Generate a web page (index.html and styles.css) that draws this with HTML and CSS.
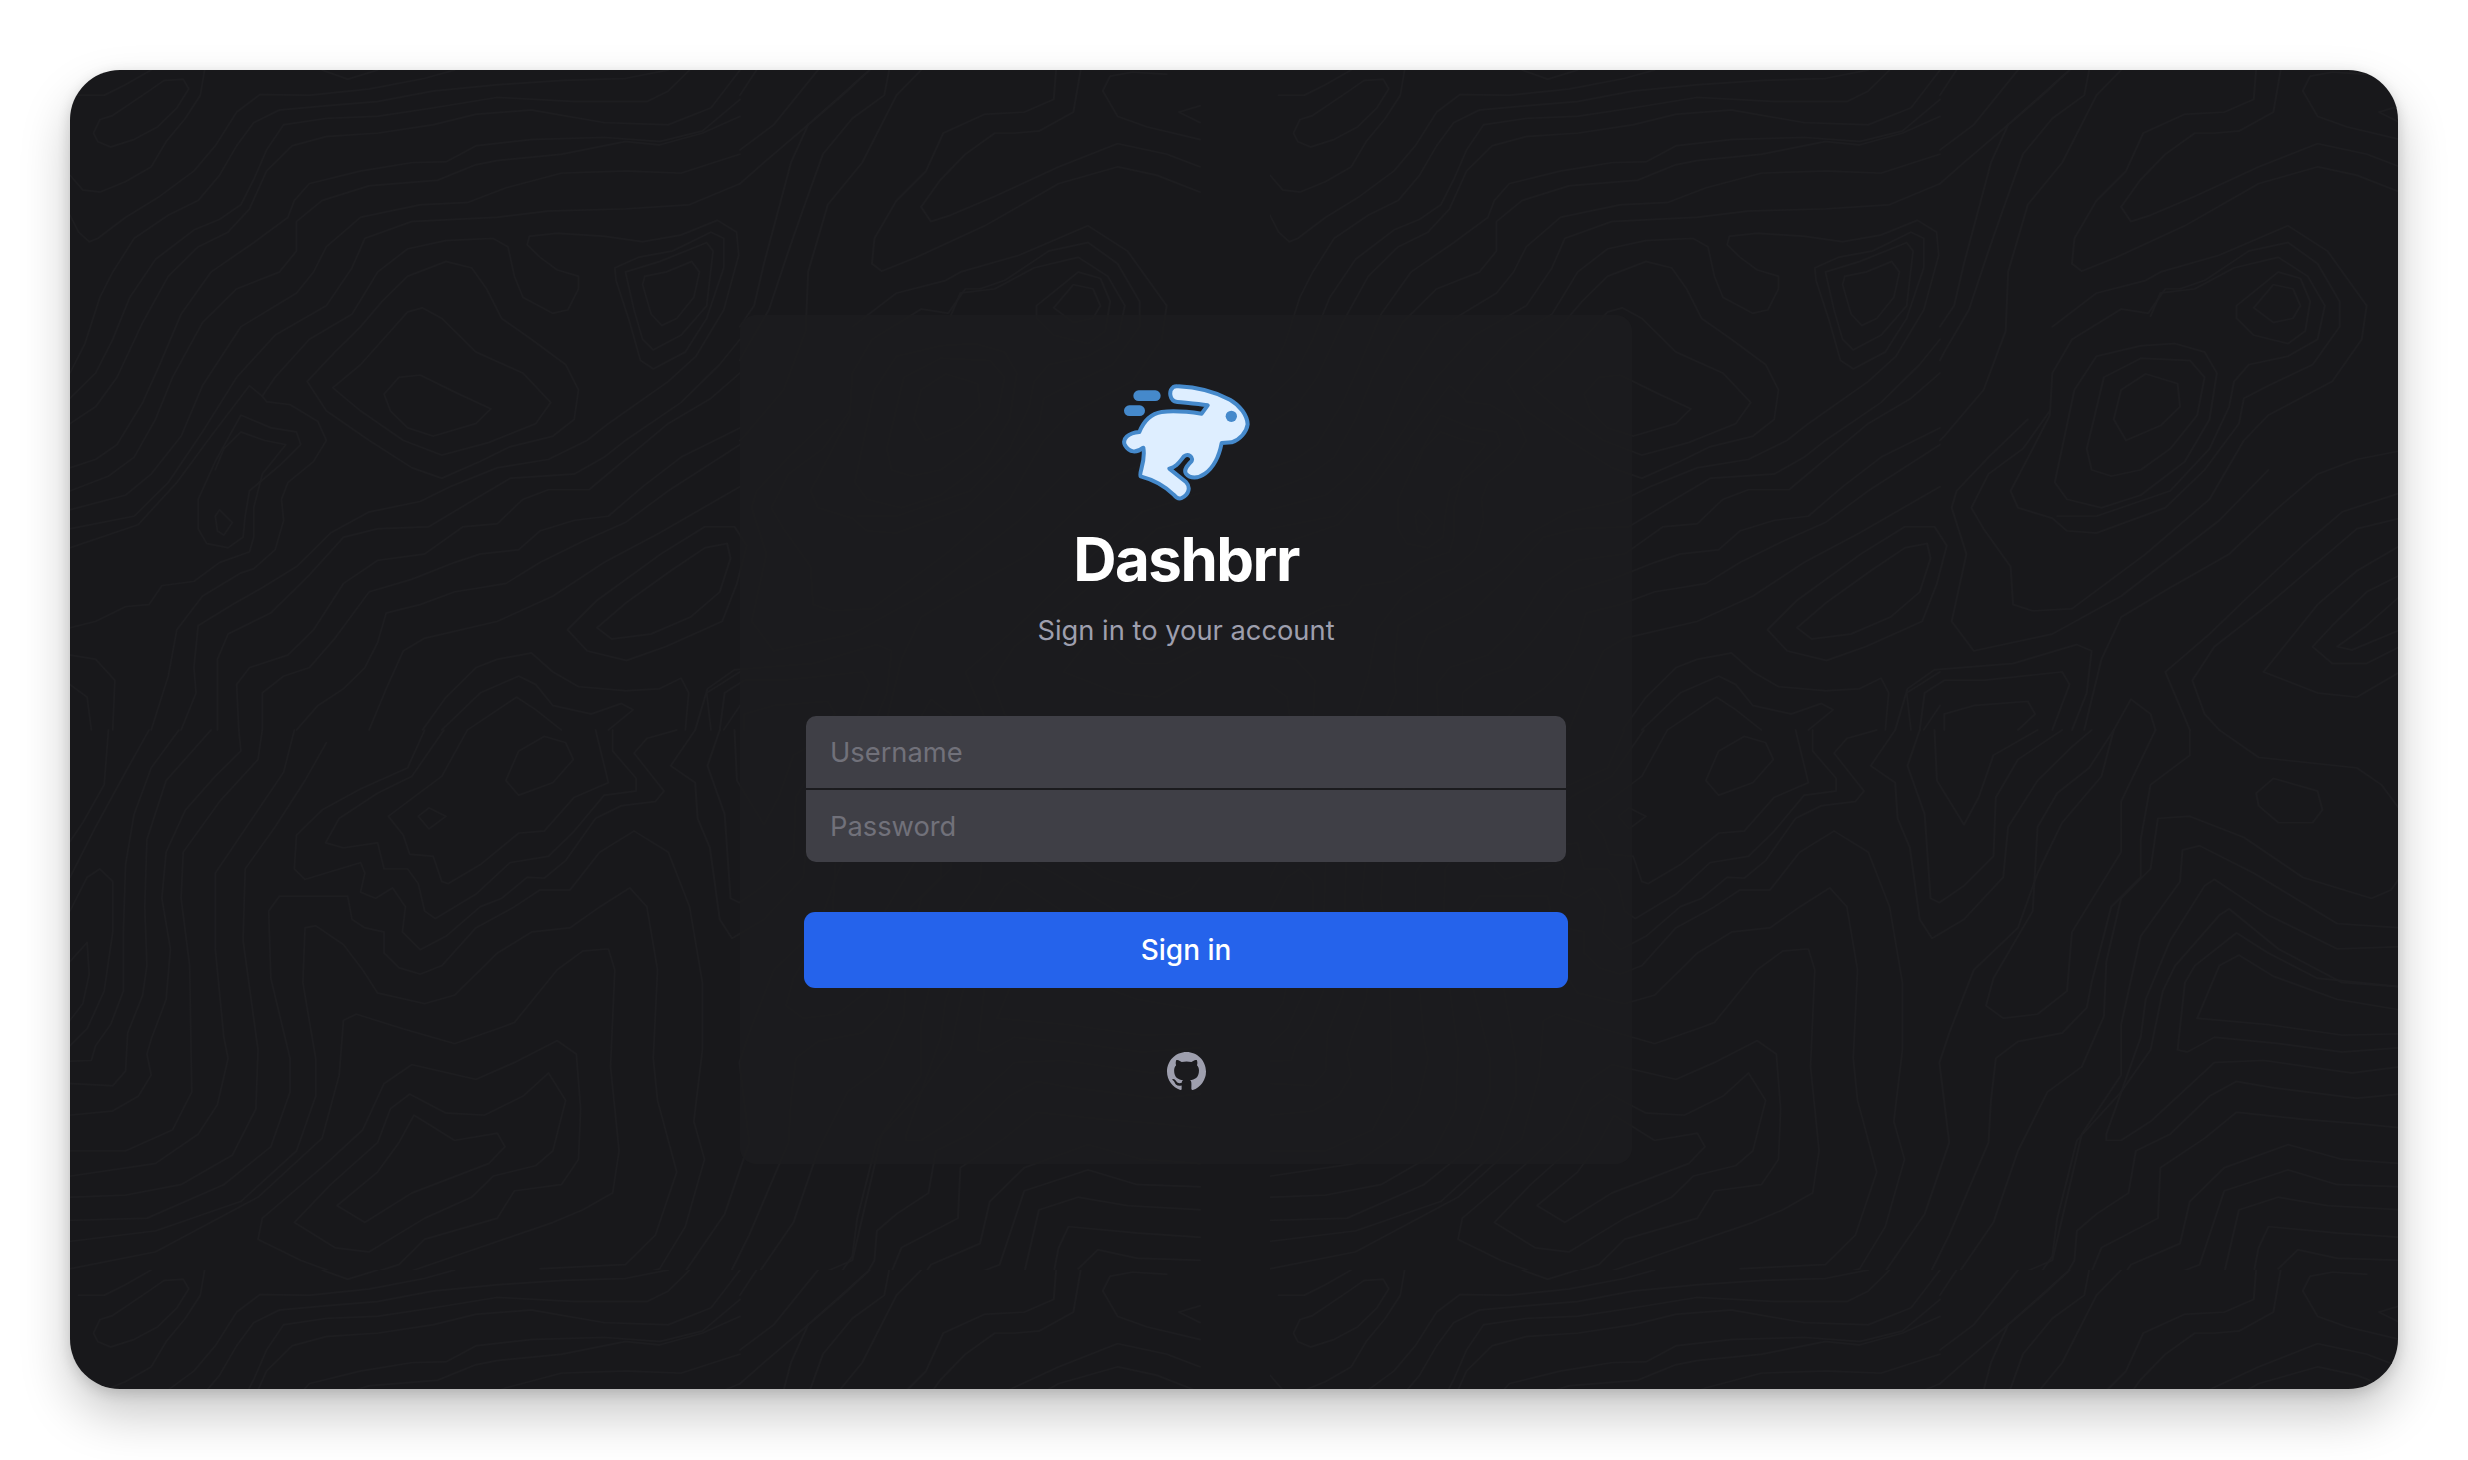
FILE: index.html
```html
<!DOCTYPE html>
<html lang="en">
<head>
<meta charset="utf-8">
<title>Dashbrr</title>
<link rel="stylesheet" href="styles.css">
</head>
<body>
<main class="window">
  <svg class="topo" aria-hidden="true">
    <defs>
      <pattern id="topography" width="1200" height="1200" patternUnits="userSpaceOnUse">
        <g class="topo-lines" transform="scale(0.4273 0.4209)">
          <path d="M0 250 30 285 70 290 130 265 190 230 225 170 270 115 305 60 315 0"/>
          <path d="M55 150 70 118 100 108 170 60 220 25 265 22 278 45 250 90 205 135 150 165 95 183 65 170Z"/>
          <path d="M20 60 80 60 130 35 190 0"/>
          <path d="M590 0 650 22 720 0"/>
          <path d="M0 345 20 385 45 408 65 400 130 350 210 300 290 240 340 180 390 100 445 58 560 60 700 45 830 20 900 0"/>
          <path d="M0 720 35 650 70 540 100 480 150 400 230 345 300 310 350 250 390 180 430 125 490 95 600 85 720 75 850 50 1000 35 1150 25 1300 20 1400 0"/>
          <path d="M0 780 60 720 100 640 140 540 200 450 290 380 350 355 400 320 430 260 460 190 500 130 600 115 720 110 850 90 1000 65 1180 75 1350 75 1400 50 1450 0"/>
          <path d="M0 840 60 800 110 730 170 600 230 490 300 420 370 385 420 330 460 240 520 180 600 158 720 150 850 130 950 105 1080 95 1250 125 1400 130 1500 90 1568 0"/>
          <path d="M0 945 60 925 110 890 170 790 210 700 260 580 330 480 430 410 510 350 525 310 560 270 680 240 800 220 880 218 950 180 1080 165 1250 160 1380 170 1480 145 1568 70"/>
          <path d="M0 1000 90 965 150 920 200 830 240 730 310 600 390 520 490 480 530 430 530 360 590 310 700 275 860 262 950 225 1000 215 1150 200 1300 170 1380 178 1480 150 1568 110"/>
          <path d="M0 1045 130 1010 190 960 260 870 310 750 400 610 530 530 570 480 600 420 680 350 820 320 930 315 1020 280 1150 245 1300 240 1430 245 1568 200"/>
          <path d="M0 1090 150 1060 230 980 310 860 390 730 480 630 600 560 660 470 690 400 800 360 1000 350 1120 335 1300 330 1450 320 1568 270"/>
          <path d="M0 1135 160 1080 250 980 330 870 420 750 450 775 460 788 515 795 580 835 600 880 570 930 510 980 495 1020 500 1070 480 1140 430 1185 400 1195 310 1250 250 1330 230 1440 190 1568"/>
          <path d="M450 775 480 730 560 640 660 580 720 480 790 425 880 405 990 400 1025 420 1040 490 1060 540 1130 578 1165 570 1190 520 1190 490 1140 475 1100 445 1070 415 1075 395 1140 388 1250 395 1340 408 1430 392 1515 357 1560 385 1565 440 1530 570 1465 680 1400 740 1260 840 1210 880 1120 925 1000 945 890 990 820 1025 700 1050 610 1100 530 1180 450 1230 380 1270 300 1320 290 1420 295 1480 260 1568"/>
          <path d="M555 740 620 670 680 610 730 550 790 490 880 455 940 470 975 520 1010 590 1080 640 1160 700 1190 760 1180 830 1130 870 1030 895 960 930 870 970 800 945 700 880 600 810Z"/>
          <path d="M615 755 680 700 790 575 825 565 870 590 950 670 1060 720 1125 790 1090 840 980 885 870 915 780 880 680 810Z"/>
          <path d="M735 770 770 730 820 725 900 765 985 805 950 840 850 870 790 850 750 810Z"/>
          <path d="M1340 510 1345 490 1395 480 1455 455 1473 480 1460 540 1420 590 1385 607 1360 580Z"/>
          <path d="M1300 480 1380 455 1490 410 1505 430 1490 560 1430 630 1365 665 1340 640 1320 570Z"/>
          <path d="M1275 470 1330 445 1410 430 1500 385 1530 400 1530 470 1490 590 1440 670 1365 710 1335 690 1310 600 1278 500Z"/>
          <path d="M400 820 470 850 530 860 540 890 490 940 420 1000 410 1060 405 1110 370 1135 320 1125 300 1090 300 1020 340 930Z"/>
          <path d="M0 1325 60 1310 130 1275 185 1270 215 1225 290 1215 350 1170 420 1145 430 1110 430 1040 450 960 505 890 455 880 400 860 360 900 340 950"/>
          <path d="M340 1060 350 1045 380 1075 360 1105 345 1095Z"/>
          <path d="M345 1568 345 1400 370 1340 470 1290 560 1200 640 1110 720 1090 840 1085 930 1030 1030 970 1180 960 1250 920 1300 880 1430 790 1520 700 1568 640"/>
          <path d="M395 1568 390 1460 420 1420 510 1390 570 1330 640 1220 720 1165 830 1150 920 1085 1000 1078 1060 1020 1120 997 1215 997 1270 950 1400 840 1500 780 1568 720"/>
          <path d="M450 1568 450 1480 500 1440 560 1420 620 1350 700 1240 800 1210 900 1170 960 1150 1050 1140 1100 1095 1180 1070 1260 1060 1340 990 1430 920 1568 850"/>
          <path d="M530 1568 580 1510 640 1470 690 1420 720 1360 740 1290 820 1270 900 1240 1020 1220 1100 1170 1200 1120 1300 1075 1400 1000 1568 890"/>
          <path d="M700 1568 740 1470 780 1380 830 1350 1000 1310 1130 1250 1250 1170 1380 1100 1568 990"/>
          <path d="M825 1568 880 1490 950 1420 1000 1400 1080 1385 1130 1430 1190 1465 1300 1475 1380 1470 1430 1445 1448 1480 1440 1568"/>
          <path d="M870 1568 960 1480 1050 1440 1090 1460 1130 1510 1220 1530 1290 1505 1318 1520 1260 1568"/>
          <path d="M930 1568 1045 1490 1090 1520 1150 1568"/>
          <path d="M1500 1568 1490 1480 1568 1430"/>
          <path d="M1530 1568 1568 1510"/>
          <path d="M0 1390 60 1400 105 1450 100 1568"/>
          <path d="M0 1460 40 1490 50 1568"/>
        </g>
        <g class="topo-lines" transform="translate(0 660) scale(0.4273 0.4209)">
          <path d="M395 0 400 50 340 110 270 190 225 290 215 400 235 520 225 640 190 735 180 770 190 820 160 870 100 905 0 915"/>
          <path d="M0 430 40 350 70 330 100 360 100 480 80 620 40 710 0 750"/>
          <path d="M0 550 40 505 45 580 30 650 0 690"/>
          <path d="M90 0 80 130 30 220 0 265"/>
          <path d="M185 0 130 100 60 230 0 350"/>
          <path d="M255 0 190 90 150 200 130 320 125 480 125 620 95 700 60 750 50 785 0 787"/>
          <path d="M330 0 225 120 180 260 175 420 180 560 170 630 135 720 130 810 100 845 0 840"/>
          <path d="M450 0 440 70 350 170 265 290 260 400 280 560 285 860 240 950 130 1000 0 1000"/>
          <path d="M525 0 500 100 420 220 340 340 340 520 360 730 370 780 345 890 300 960 200 1030 0 1060"/>
          <path d="M600 30 550 120 480 230 410 330 405 500 440 760 435 900 380 1010 260 1080 130 1105 0 1110"/>
          <path d="M830 0 790 90 680 140 590 190 530 250 525 330 550 355 680 315 690 340 680 385 715 400 755 375 785 420 778 480 820 522 880 490 960 420 1010 400 1070 350 1110 352 1160 310 1230 210 1290 180 1370 170 1390 145 1320 55 1350 20 1420 0"/>
          <path d="M875 0 800 110 720 150 630 210 598 268 640 280 720 268 735 330 790 330 815 365 830 430 855 448 950 390 1030 315 1120 300 1180 240 1250 155 1325 145 1325 115 1270 50 1270 0"/>
          <path d="M930 0 870 110 745 205 780 250 795 295 850 300 870 360 885 365 960 320 1050 245 1110 240 1180 160 1260 125 1230 0"/>
          <path d="M815 205 840 185 880 205 840 235Z"/>
          <path d="M1020 120 1050 50 1110 15 1160 30 1178 70 1130 125 1050 155Z"/>
          <path d="M360 1080 470 990 515 860 515 780 470 590 465 430 490 395 650 395 660 450 690 470 735 480 735 530 770 565 820 580 870 560 950 470 1040 420 1100 380 1170 380 1240 290 1320 240 1400 290 1450 420 1480 600 1480 760 1460 930 1485 1020 1440 1180 1380 1280 1280 1310"/>
          <path d="M360 1080 180 1160 0 1165"/>
          <path d="M0 1215 200 1190 400 1120 530 1000 575 870 575 780 545 600 550 470 575 465 640 510 685 570 720 625 830 650 900 630 1000 530 1080 480 1170 470 1240 420 1310 375 1350 420 1375 570 1365 780 1375 880 1420 1050 1370 1200 1300 1270 1100 1280"/>
          <path d="M0 1280 200 1240 440 1110 590 970 630 820 640 690 670 675 780 710 900 745 1000 710 1040 695 1140 570 1200 525 1260 520 1275 570 1265 800 1285 1000 1270 1100 1200 1140 1130 1170 900 1250 700 1320"/>
          <path d="M800 795 950 830 1040 790 1140 738 1185 770 1195 900 1190 1020 1150 1080 1040 1095 1000 1160 830 1210 770 1270 660 1305 540 1260 440 1210 450 1160 600 1030 685 950 735 840Z"/>
          <path d="M795 865 880 910 970 915 1060 870 1120 815 1160 880 1130 1000 1090 1035 990 1060 940 1110 830 1160 700 1240 620 1230 525 1170 610 1080 720 980 750 900Z"/>
          <path d="M805 915 900 975 1000 958 1018 990 980 1030 800 1100 690 1170 625 1130 720 1050 770 980Z"/>
        </g>
        <g class="topo-lines" transform="translate(360 0) scale(0.4911 0.4209)">
          <path d="M280 1330 340 1260 470 1150 560 1085 620 1085 645 1130 625 1220 595 1310 480 1370 400 1403 320 1380Z"/>
          <path d="M340 1325 400 1265 490 1190 560 1135 605 1125 612 1160 590 1240 530 1300 450 1340 370 1352Z"/>
          <path d="M631 190 700 130 790 0"/>
          <path d="M631 60 665 0"/>
          <path d="M631 270 680 220 770 130 895 0"/>
          <path d="M895 0 840 60 770 130 735 220 710 330 680 460 660 560 631 610"/>
          <path d="M935 0 925 60 860 115 800 200 760 330 730 430 690 570 640 670 631 690"/>
          <path d="M1000 0 950 60 880 220 810 320 770 480 765 620 720 760 640 870 631 880"/>
          <path d="M1000 325 1020 360 1060 345 1150 300 1280 230 1400 175 1500 200 1568 230"/>
          <path d="M1000 325 1040 260 1090 200 1150 150 1190 150 1240 145 1310 100 1325 0"/>
          <path d="M900 460 920 478 990 445 1130 370 1280 270 1400 230 1480 250 1568 290"/>
          <path d="M900 460 905 400 950 310 1010 240 1045 150 1130 105 1210 100 1270 70 1275 0"/>
          <path d="M1270 565 1310 510 1350 520 1365 560 1350 590 1310 600Z"/>
          <path d="M1235 560 1320 480 1365 495 1385 550 1375 620 1340 650 1270 630 1235 590Z"/>
          <path d="M1060 585 1080 530 1150 520 1230 470 1320 445 1380 490 1415 560 1400 640 1340 680 1260 700 1230 740 1220 800 1180 900 1100 1000 950 1060 870 1060"/>
          <path d="M1055 578 1000 568 900 640 860 720 855 820 820 900 775 1000 790 1040 860 1065 890 1095 950 1100 1090 1040 1170 950 1240 840 1250 780 1300 750 1390 700 1445 610 1445 550 1400 460 1340 410 1260 430 1170 500 1120 520 1090 520Z"/>
          <path d="M860 610 950 530 1050 500 1080 480 1200 440 1340 370 1420 430 1500 560 1490 640 1430 740 1300 820 1250 880 1180 1020 1050 1150 900 1280 820 1285 780 1270 775 1180 720 1090 695 1040 730 960 800 900 855 810"/>
          <path d="M985 830 1000 760 1050 722 1115 745 1120 800 1080 845 1010 880Z"/>
          <path d="M930 900 965 730 1040 685 1140 690 1170 730 1155 820 1100 900 1040 950 980 965 940 950Z"/>
          <path d="M865 980 905 760 950 680 1040 655 1110 650 1170 670 1195 720 1180 830 1130 930 1040 1010 960 1040 890 1020Z"/>
          <path d="M810 830 730 920 665 1000 655 1040 685 1150 655 1310 700 1380 860 1340 1000 1250 1200 1070 1300 950"/>
          <path d="M1568 905 1480 925 1400 960 1320 1040 1220 1150 1100 1230 1000 1300 960 1400 925 1568"/>
          <path d="M1568 1005 1450 1050 1370 1130 1260 1250 1180 1340 1090 1430 1130 1540 1140 1568"/>
          <path d="M1568 1065 1480 1090 1400 1170 1300 1270 1190 1370 1145 1450 1170 1530 1200 1568"/>
          <path d="M1568 1130 1480 1190 1400 1270 1290 1430 1400 1480 1480 1490 1568 1430"/>
          <path d="M1568 1200 1500 1240 1430 1320 1390 1370 1430 1410 1500 1410 1568 1370"/>
          <path d="M1568 1250 1500 1320 1440 1370 1470 1378 1568 1330"/>
          <path d="M640 1568 640 1530 700 1510 810 1500 825 1530 790 1568"/>
          <path d="M590 1568 600 1480 640 1450 720 1450 880 1430 895 1460 860 1568"/>
          <path d="M540 1568 565 1470 620 1425 780 1410 910 1365 940 1380 930 1480 900 1568"/>
          <path d="M985 1568 1020 1495 1060 1530 1070 1568"/>
          <path d="M1370 50 1400 110 1460 135 1568 165"/>
          <path d="M1370 50 1385 15 1430 5 1500 10"/>
          <path d="M1568 85 1525 100 1568 125"/>
        </g>
        <g class="topo-lines" transform="translate(360 660) scale(0.4911 0.4209)">
          <path d="M620 0 625 120 680 225 710 160 740 60 830 0"/>
          <path d="M590 0 565 85 600 200 612 400 630 410 680 370 740 300 745 160 790 70 880 0"/>
          <path d="M540 0 490 85 540 125 545 210 570 280 590 450 615 495 680 450 760 350 770 230 830 120 900 40 940 0"/>
          <path d="M985 0 960 110 880 220 830 340 790 470 700 570 650 720 630 790 650 980 600 1150 500 1320"/>
          <path d="M1070 0 1000 170 1000 290 900 480 890 620 830 675 760 685 725 655 740 590 820 430 830 230 870 150 935 90 985 0"/>
          <path d="M1140 0 1140 60 1060 130 1040 260 1040 350 980 420 940 600 930 660 880 720 790 740 745 780 735 880 730 980 650 1200 590 1340"/>
          <path d="M1568 350 1550 380 1510 400 1370 350 1250 255 1140 205 1075 210 1060 330 1000 400 970 550 965 680 920 800 850 860 790 1000 740 1170 640 1340"/>
          <path d="M1568 470 1440 460 1270 340 1160 275 1125 285 1120 360 1040 490 1000 700 1000 820 920 960 860 1260 800 1290"/>
          <path d="M1568 515 1440 520 1300 440 1190 355 1170 370 1100 500 1050 640 1040 730 970 960 970 975 1000 975 1060 930 1190 790 1290 785 1470 815 1568 800"/>
          <path d="M1568 610 1450 600 1320 520 1220 425 1200 440 1110 560 1085 620 1060 760 1000 860 910 975 870 1160 860 1250 800 1350"/>
          <path d="M1568 610 1400 590 1300 530 1235 482 1150 560 1130 600 1115 760 1135 765 1190 730 1320 745 1450 765 1568 755"/>
          <path d="M1155 685 1200 560 1240 535 1310 585 1440 640 1568 665"/>
          <path d="M1155 685 1300 700 1450 725 1568 722"/>
          <path d="M1568 865 1480 875 1310 850 1235 835 1180 870 1100 960 1030 1000 1015 1100 950 1150 910 1190 905 1260 860 1350"/>
          <path d="M1568 945 1480 935 1370 925 1235 908 1170 970 1080 1040 1075 1160 960 1230 925 1330"/>
          <path d="M1568 1030 1450 1020 1340 985 1210 1040 1140 1120 1120 1220 1020 1270 980 1340"/>
          <path d="M1568 1085 1440 1080 1340 1045 1210 1095 1160 1270 1050 1320"/>
          <path d="M1568 1140 1420 1130 1320 1110 1240 1140 1210 1290"/>
          <path d="M1568 1205 1440 1195 1300 1180 1280 1230 1260 1350"/>
          <path d="M1568 1260 1440 1255 1360 1235 1320 1280"/>
          <path d="M1200 0 1280 65 1480 90 1530 130 1568 190"/>
          <path d="M1275 150 1310 115 1400 145 1410 190 1390 220 1320 220 1280 180Z"/>
        </g>
      </pattern>
    </defs>
    <rect class="topo-fill" width="100%" height="100%"/>
  </svg>

  <section class="card">
    <svg class="logo" viewBox="120 65 395 360" aria-label="Dashbrr logo" role="img">
      <rect class="logo-dash" x="160" y="90" width="82" height="32" rx="16"/>
      <rect class="logo-dash" x="132" y="135" width="63" height="32" rx="16"/>
      <path class="logo-body" d="M295 78C340 80 400 92 450 118C480 135 502 165 503 192C500 215 480 238 455 246L425 248C418 285 405 318 375 340C355 355 330 355 318 340C310 328 322 315 335 302C340 290 325 278 312 288C298 305 290 320 268 325L318 365C332 380 328 402 305 413C295 418 288 412 280 402C255 378 220 358 182 348C175 338 198 305 190 262C170 278 148 278 135 255C125 235 145 218 178 215C192 180 215 160 245 155C285 150 330 155 365 160L383 135C350 130 320 128 292 125C268 122 265 92 280 80C285 77 290 77 295 78Z"/>
      <circle class="logo-eye" cx="454" cy="168" r="17"/>
    </svg>
    <h1 class="title">Dashbrr</h1>
    <p class="subtitle">Sign in to your account</p>
    <form class="form">
      <div class="fields">
        <input class="field" type="text" placeholder="Username">
        <input class="field" type="password" placeholder="Password">
      </div>
      <button class="submit" type="button">Sign in</button>
    </form>
    <a class="github" href="#" aria-label="GitHub">
      <svg viewBox="0 0 16 16" class="github-icon"><path d="M8 0C3.58 0 0 3.58 0 8c0 3.54 2.29 6.53 5.47 7.59.4.07.55-.17.55-.38 0-.19-.01-.82-.01-1.49-2.01.37-2.53-.49-2.69-.94-.09-.23-.48-.94-.82-1.13-.28-.15-.68-.52-.01-.53.63-.01 1.08.58 1.23.82.72 1.21 1.87.87 2.33.66.07-.52.28-.87.51-1.07-1.78-.2-3.64-.89-3.64-3.95 0-.87.31-1.59.82-2.15-.08-.2-.36-1.02.08-2.12 0 0 .67-.21 2.2.82.64-.18 1.32-.27 2-.27.68 0 1.36.09 2 .27 1.53-1.04 2.2-.82 2.2-.82.44 1.1.16 1.92.08 2.12.51.56.82 1.27.82 2.15 0 3.07-1.87 3.75-3.65 3.95.29.25.54.73.54 1.48 0 1.07-.01 1.93-.01 2.2 0 .21.15.46.55.38A8.013 8.013 0 0016 8c0-4.42-3.58-8-8-8z"/></svg>
    </a>
  </section>
</main>
</body>
</html>
```
FILE: styles.css
```css
* { box-sizing: border-box; }

html, body {
  height: 100%;
  margin: 0;
}

body {
  background: #fff;
  padding: 70px;
  overflow: hidden;
  font-family: Inter, "Liberation Sans", sans-serif;
}

.window {
  position: relative;
  display: flex;
  width: 2328px;
  height: 1319px;
  padding: 245px 0 0 670px;
  align-items: flex-start;
  background: #18181b;
  border-radius: 50px;
  overflow: hidden;
  box-shadow: 0 25px 50px rgba(0, 0, 0, 0.22), 0 4px 14px rgba(0, 0, 0, 0.14);
}

.topo {
  position: absolute;
  inset: 0;
  width: 100%;
  height: 100%;
}

.topo-fill { fill: url(#topography); }

.topo-lines {
  fill: none;
  stroke: #1d1d20;
  stroke-width: 3.4;
  stroke-linejoin: round;
  stroke-linecap: round;
}

.card {
  position: relative;
  display: flex;
  flex-direction: column;
  align-items: center;
  width: 892px;
  height: 849px;
  padding: 67px 64px 0;
  background: rgba(28, 28, 31, 0.85);
  border-radius: 16px;
}

.logo {
  width: 131.67px;
  height: 120px;
}

.logo-dash, .logo-eye { fill: #4589cb; }

.logo-body {
  fill: #deeeff;
  stroke: #4589cb;
  stroke-width: 12;
  stroke-linejoin: round;
}

.title {
  margin: 25px 0 0;
  font-size: 60px;
  line-height: 64px;
  font-weight: 700;
  letter-spacing: -1.5px;
  color: #fff;
}

.subtitle {
  margin: 20px 0 0;
  font-size: 27.3px;
  line-height: 40px;
  color: #9e9fae;
}

.form {
  display: flex;
  flex-direction: column;
  width: 100%;
  margin-top: 65px;
}

.fields {
  display: flex;
  flex-direction: column;
  gap: 2px;
  margin: 0 2px;
  border-radius: 10px;
  overflow: hidden;
}

.field {
  height: 72px;
  padding: 0 24px;
  border: 0;
  background: #3f3f46;
  color: #fff;
  font: 400 27.3px Inter, "Liberation Sans", sans-serif;
}

.field::placeholder {
  color: #71717a;
  opacity: 1;
}

.submit {
  height: 76px;
  margin-top: 50px;
  border: 0;
  border-radius: 11px;
  background: #2563eb;
  color: #fff;
  font: 500 28px Inter, "Liberation Sans", sans-serif;
}

.github {
  display: block;
  margin-top: 64px;
  line-height: 0;
}

.github-icon {
  width: 39px;
  height: 39px;
  fill: #9e9fae;
}
```
